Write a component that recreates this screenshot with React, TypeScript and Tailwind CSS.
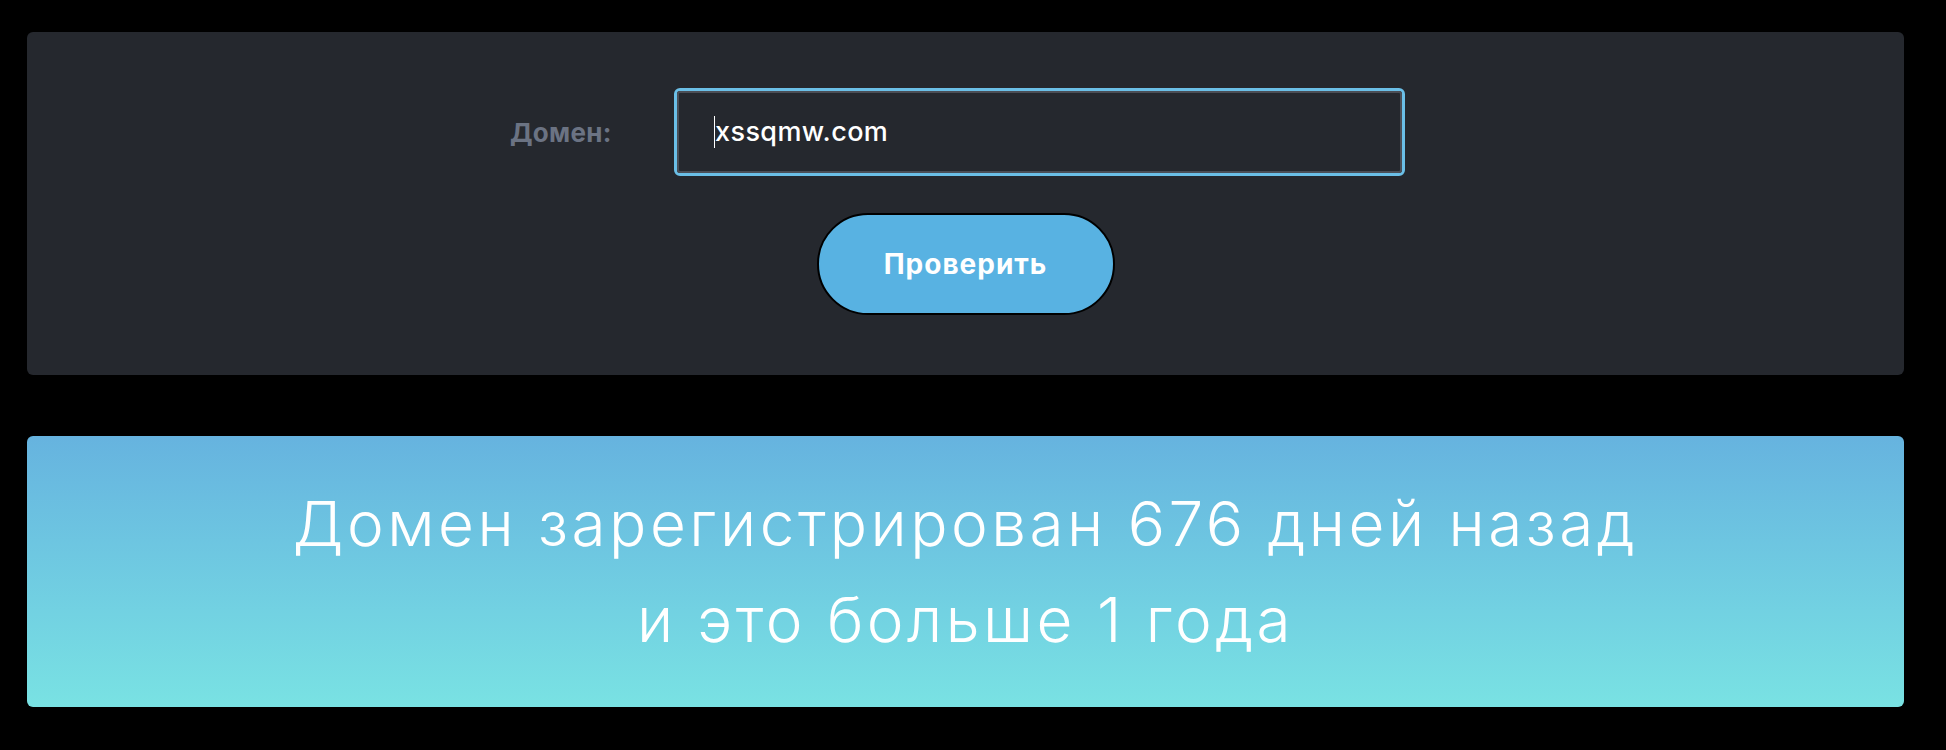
export default function App() {
  return (
    <div className="min-h-[750px] w-full bg-black pt-[32px] font-['Inter',sans-serif]">
      <div className="ml-[27px] w-[1877px]">
        {/* Search form */}
        <div className="flex flex-col items-center rounded-[6px] bg-[#25282e] pt-[56px] pb-[60px]">
          <div className="flex w-full items-center pl-[483px]">
            <label className="w-[164px] text-[26px] font-bold tracking-[0.3px] text-[#6b7383]">Домен:</label>
            <div className="h-[88px] w-[731px] rounded-[6px] border-[3px] border-[#6bbfe7]">
              <div className="flex h-full items-center rounded-[3px] border-2 border-[#4b4e56] bg-[#25282e] pl-[35px]">
                <span className="h-[32px] w-px bg-white" />
                <span className="text-[27px] font-medium tracking-[0.4px] text-white">xssqmw.com</span>
              </div>
            </div>
          </div>
          <button className="mt-[37px] h-[102px] w-[298px] rounded-full border-2 border-black bg-[#58b2e2] text-[28px] font-bold tracking-[1px] text-white">
            Проверить
          </button>
        </div>

        {/* Result */}
        <div className="mt-[61px] rounded-[6px] bg-gradient-to-b from-[#66b3df] to-[#79e2e3] pt-[40px] pb-[39px] text-center text-[62px] font-light leading-[96px] tracking-[3.5px] text-white">
          <p>Домен зарегистрирован 676 дней назад</p>
          <p>и это больше 1 года</p>
        </div>
      </div>
    </div>
  );
}
